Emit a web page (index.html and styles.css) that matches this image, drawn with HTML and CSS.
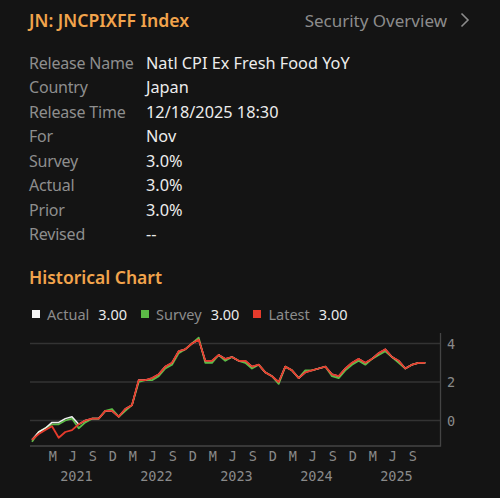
FILE: index.html
```html
<!DOCTYPE html>
<html>
<head>
    <link rel="stylesheet" href="styles.css">
</head>
<body>
    <div class="page">
        <div class="header">
            <div class="title">JN: JNCPIXFF Index</div>
            <a class="overview">
                Security Overview
                <svg class="chevron" width="10" height="16" viewBox="0 0 10 16">
                    <polyline points="1.5,1.5 8,8 1.5,14.5" />
                </svg>
            </a>
        </div>

        <dl class="details">
            <dt>Release Name</dt><dd>Natl CPI Ex Fresh Food YoY</dd>
            <dt>Country</dt><dd>Japan</dd>
            <dt>Release Time</dt><dd>12/18/2025 18:30</dd>
            <dt>For</dt><dd>Nov</dd>
            <dt>Survey</dt><dd>3.0%</dd>
            <dt>Actual</dt><dd>3.0%</dd>
            <dt>Prior</dt><dd>3.0%</dd>
            <dt>Revised</dt><dd>--</dd>
        </dl>

        <div class="section-title">Historical Chart</div>

        <div class="legend">
            <span class="key"><i class="swatch actual"></i><span class="name">Actual</span><span class="val">3.00</span></span>
            <span class="key"><i class="swatch survey"></i><span class="name">Survey</span><span class="val">3.00</span></span>
            <span class="key"><i class="swatch latest"></i><span class="name">Latest</span><span class="val">3.00</span></span>
        </div>

        <svg class="chart" id="chart" width="470" height="160" viewBox="0 0 470 160"></svg>
    </div>

    <script>
        // monthly YoY, Dec 2020 .. Nov 2025
        var latest = [-1.0,
            -0.7, -0.5, -0.3, -0.9, -0.6, -0.5, -0.2, 0.0, 0.1, 0.1, 0.5, 0.5,
            0.2, 0.6, 0.8, 2.1, 2.1, 2.2, 2.4, 2.8, 3.0, 3.6, 3.7, 4.0,
            4.2, 3.1, 3.1, 3.4, 3.2, 3.3, 3.1, 3.1, 2.8, 2.9, 2.5, 2.3,
            2.0, 2.8, 2.6, 2.2, 2.5, 2.6, 2.7, 2.8, 2.4, 2.3, 2.7, 3.0,
            3.2, 3.0, 3.2, 3.5, 3.7, 3.3, 3.1, 2.7, 2.9, 3.0, 3.0];
        var actual = latest.slice();
        [-1.0, -0.6, -0.4, -0.1, -0.1, 0.1, 0.2, -0.2].forEach(function(v, i) { actual[i] = v; });
        var survey = [-1.1,
            -0.6, -0.4, -0.2, -0.2, 0.0, 0.1, -0.4, -0.1, 0.1, 0.1, 0.5, 0.6,
            0.2, 0.5, 0.8, 2.0, 2.1, 2.1, 2.3, 2.7, 2.9, 3.5, 3.7, 4.0,
            4.3, 3.0, 3.0, 3.4, 3.1, 3.3, 3.1, 3.0, 2.7, 2.9, 2.5, 2.3,
            1.9, 2.8, 2.6, 2.2, 2.6, 2.6, 2.7, 2.8, 2.3, 2.2, 2.6, 2.9,
            3.1, 2.9, 3.2, 3.4, 3.6, 3.3, 3.0, 2.7, 2.9, 3.0, 3.0];

        var NS = "http://www.w3.org/2000/svg";
        var chart = document.getElementById("chart");
        var right = 411.5, bottom = 116;

        function xAt(m) { return 3 + m * 20 / 3; }
        function yAt(v) { return 90.5 - v * 19.25; }

        function add(tag, attrs, text) {
            var el = document.createElementNS(NS, tag);
            for (var k in attrs) el.setAttribute(k, attrs[k]);
            if (text) el.textContent = text;
            chart.appendChild(el);
            return el;
        }

        // grid + y labels
        [4, 2, 0].forEach(function(v) {
            add("line", { x1: 1, x2: right, y1: yAt(v), y2: yAt(v), "class": "grid" });
            add("text", { x: 418, y: yAt(v) + 5, "class": "axis-label" }, String(v));
        });
        add("polyline", { points: "1," + bottom + " " + right + "," + bottom + " " + right + ",3", "class": "axis" });

        // quarter letters and years
        var letters = ["M", "J", "S", "D"];
        for (var q = 0; q < 19; q++) {
            add("text", { x: 23.7 + q * 20, y: 131, "class": "axis-label mid" }, letters[q % 4]);
        }
        for (var y = 0; y < 5; y++) {
            add("text", { x: 47.5 + y * 80, y: 151, "class": "axis-label mid" }, String(2021 + y));
        }

        function line(data, cls) {
            var pts = data.map(function(v, i) { return xAt(i).toFixed(1) + "," + yAt(v).toFixed(1); });
            add("polyline", { points: pts.join(" "), "class": "series " + cls });
        }
        line(survey, "survey");
        line(actual, "actual");
        line(latest, "latest");
    </script>
</body>
</html>
```

FILE: styles.css
```css
body {
    margin: 0;
    background-color: #141414;
    font-family: "Noto Sans", sans-serif;
    color: #ebebeb;
}
.page {
    padding: 6px 30px 0 29px;
}

.header {
    display: flex;
    justify-content: space-between;
    align-items: center;
    height: 28px;
    margin-bottom: 16.75px;
}
.title {
    color: #f2a44c;
    font-size: 17.6px;
    font-weight: 600;
}
.overview {
    display: flex;
    align-items: center;
    gap: 13px;
    color: #8c8c8c;
    font-size: 17px;
    text-decoration: none;
}
.chevron polyline {
    fill: none;
    stroke: #8c8c8c;
    stroke-width: 1.6;
}

.details {
    display: grid;
    grid-template-columns: 117px 1fr;
    grid-auto-rows: 24.5px;
    align-items: center;
    margin: 0;
    font-size: 16px;
    line-height: 24.5px;
}
.details dt {
    color: #8e8e8e;
    letter-spacing: -0.2px;
}
.details dd {
    margin: 0;
    color: #ececec;
    font-size: 16.3px;
}

.section-title {
    margin-top: 18px;
    height: 24px;
    line-height: 24px;
    color: #f2a44c;
    font-size: 17.5px;
    font-weight: 600;
}

.legend {
    display: flex;
    gap: 14px;
    align-items: center;
    height: 20px;
    margin: 15px 0 0 3px;
    font-size: 14.5px;
}
.key {
    display: flex;
    align-items: center;
}
.swatch {
    width: 8px;
    height: 8px;
    margin-right: 7px;
}
.swatch.actual { background-color: #f4f4f4; }
.swatch.survey { background-color: #5cbb47; }
.swatch.latest { background-color: #e63b2c; }
.name {
    color: #8c8c8c;
    margin-right: 9px;
}
.val {
    color: #ebebeb;
}

.chart {
    display: block;
    margin-top: 6px;
}
.chart .grid {
    stroke: #333333;
    stroke-width: 1.3;
}
.chart .axis {
    fill: none;
    stroke: #444444;
    stroke-width: 1.3;
}
.chart .axis-label {
    fill: #8a8a8a;
    font-family: "DejaVu Sans Mono", monospace;
    font-size: 13.5px;
}
.chart .mid {
    text-anchor: middle;
}
.series {
    fill: none;
    stroke-linejoin: round;
}
.series.actual { stroke: #f0f0f0; stroke-width: 1.5; }
.series.survey { stroke: #5cbb47; stroke-width: 1.8; }
.series.latest { stroke: #e63b2c; stroke-width: 1.8; }
```
